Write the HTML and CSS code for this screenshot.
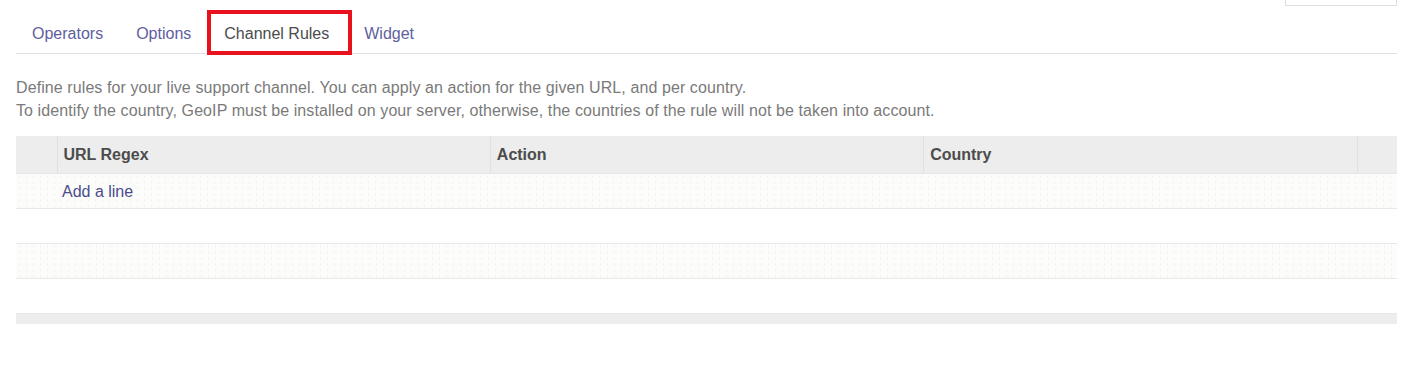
FILE: index.html
```html
<!DOCTYPE html>
<html>
<head>
<meta charset="utf-8">
<link rel="stylesheet" href="styles.css">
</head>
<body>
<div class="page">
  <div class="topbar"><div class="topbox"></div></div>
  <ul class="tabs">
    <li class="tab first"><a>Operators</a></li>
    <li class="tab"><a>Options</a></li>
    <li class="tab active"><a>Channel Rules</a></li>
    <li class="tab after"><a>Widget</a></li>
  </ul>
  <div class="help">
    <p>Define rules for your live support channel. You can apply an action for the given URL, and per country.</p>
    <p>To identify the country, GeoIP must be installed on your server, otherwise, the countries of the rule will not be taken into account.</p>
  </div>
  <table class="grid">
    <thead>
      <tr>
        <th class="c-handle"></th>
        <th class="c-col">URL Regex</th>
        <th class="c-col">Action</th>
        <th class="c-col">Country</th>
        <th class="c-trash"></th>
      </tr>
    </thead>
    <tbody>
      <tr class="odd"><td></td><td colspan="4"><a class="add">Add a line</a></td></tr>
      <tr class="even"><td colspan="5"></td></tr>
      <tr class="odd"><td colspan="5"></td></tr>
      <tr class="even"><td colspan="5"></td></tr>
    </tbody>
    <tfoot>
      <tr><td colspan="5"></td></tr>
    </tfoot>
  </table>
</div>
</body>
</html>
```

FILE: styles.css
```css
html, body {
  margin: 0;
  padding: 0;
  background: #fff;
}
body {
  font-family: "Liberation Sans", Arial, sans-serif;
  font-size: 16px;
  color: #4c4c4c;
}
.page {
  padding: 0 17px 0 16px;
}
.topbar {
  display: flex;
  justify-content: flex-end;
  height: 6px;
}
.topbox {
  width: 110px;
  height: 10px;
  margin-top: -5px;
  border: 1px solid #dde0e0;
  border-top: none;
  background: #fff;
}
.tabs {
  list-style: none;
  margin: 0;
  padding: 4px 0 0 0;
  display: flex;
  border-bottom: 1px solid #dee2e6;
  height: 43px;
  box-sizing: content-box;
}
.tab {
  display: flex;
  align-items: center;
  padding: 0 16px;
  box-sizing: border-box;
  height: 45px;
}
.tab.first {
  padding-right: 17px;
}
.tab a {
  color: #5e5e9e;
  line-height: 20px;
  margin-top: 2px;
}
.tab.active {
  border: 4px solid #e8121f;
  padding: 0 19px 0 13px;
}
.tab.active a {
  color: #4c4c4c;
}
.tab.after {
  padding-left: 12px;
}
.help {
  margin-top: 22px;
  color: #7a7a7a;
  font-size: 16px;
  line-height: 23px;
  letter-spacing: 0.09px;
}
.help p {
  margin: 0;
}
.grid {
  width: 100%;
  margin-top: 14px;
  border-collapse: collapse;
  table-layout: fixed;
}
.grid th {
  box-sizing: border-box;
  background: #ededed;
  height: 37px;
  padding: 1px 6px 0;
  text-align: left;
  font-weight: bold;
  color: #4c4c4c;
  border-left: 1px solid #e0e0e0;
  border-bottom: 1px solid #e4e6e8;
}
.grid th:first-child {
  border-left: none;
}
.c-handle { width: 41px; }
.c-trash { width: 40px; }
.grid tbody td {
  height: 34px;
  padding: 0;
  border-bottom: 1px solid #e6e8ea;
}
.grid tbody tr.odd td {
  background-color: #fcfcfa;
  background-image: radial-gradient(circle, #efefed 0.6px, transparent 0.8px);
  background-size: 7px 6px;
}
.add {
  color: #4c4c8c;
  padding-left: 5px;
  position: relative;
  top: 1px;
}
.grid tfoot td {
  height: 10px;
  padding: 0;
  background: #ededed;
}
```
